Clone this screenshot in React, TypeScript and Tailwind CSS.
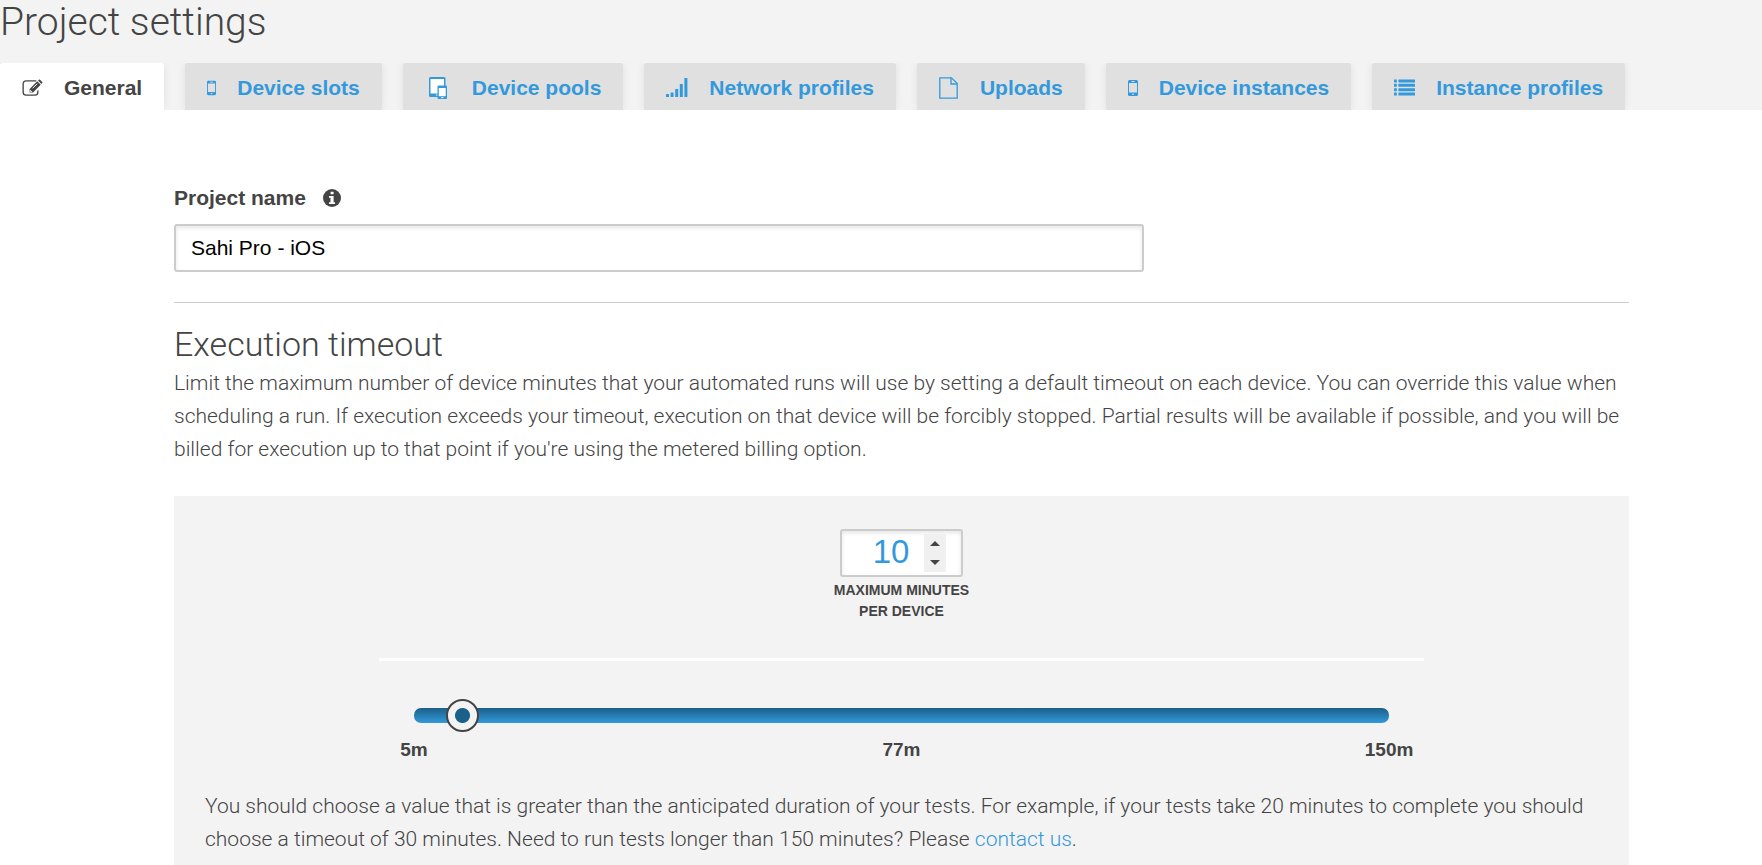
import React, { useState } from 'react';

type IconProps = { className?: string };

const EditIcon: React.FC<IconProps> = ({ className }) => (
  <svg className={className} width="22" height="18" viewBox="0 0 22 18" fill="none" stroke="currentColor">
    <path d="M15 1.6H4.5Q1.2 1.6 1.2 4.6V13.4Q1.2 16.4 4.5 16.4H13.5Q16.6 16.4 16.6 13.4V11.5" strokeWidth="1.4" />
    <path d="M8 13.8V10L16 2L19.6 5.6L11.6 13.8Z" fill="currentColor" stroke="none" />
    <path d="M16.8 1.2L18 0.2Q18.6 0 19.2 .5L21.2 2.6Q21.7 3.2 21.2 3.8L20.3 4.8Z" fill="currentColor" stroke="none" />
    <path d="M11.2 9.2L16 4.6M9 11.2V12.8H10.6" stroke="white" strokeWidth="1" />
  </svg>
);

const PhoneIcon: React.FC<IconProps> = ({ className }) => (
  <svg className={className} width="10" height="16" viewBox="0 0 10 16">
    <rect width="10" height="16" rx="1.5" fill="currentColor" />
    <rect x="1" y="3" width="8" height="9.5" fill="#e0e0e0" />
    <path d="M3.5 1.5H6.5M4 14.2H6" stroke="#e0e0e0" />
  </svg>
);

const PoolIcon: React.FC<IconProps> = ({ className }) => (
  <svg className={className} width="18" height="22" viewBox="0 0 18 22">
    <rect width="16.5" height="20" rx="1.5" fill="currentColor" />
    <rect x="1.5" y="2" width="13.5" height="14.5" fill="white" />
    <rect x="8.5" y="8.5" width="9.5" height="13.5" rx="1" fill="currentColor" />
    <rect x="9.8" y="11" width="6.9" height="8.2" fill="white" />
    <path d="M7 18H8.5M12.2 20.6H14.4" stroke="white" strokeWidth="1" />
  </svg>
);

const SignalIcon: React.FC<IconProps> = ({ className }) => (
  <svg className={className} width="22" height="19" viewBox="0 0 22 19" fill="currentColor">
    <rect x="0" y="16" width="3" height="3" rx=".5" />
    <rect x="4.6" y="14.5" width="3" height="4.5" rx=".5" />
    <rect x="9.2" y="11" width="3" height="8" rx=".5" />
    <rect x="13.8" y="6" width="3" height="13" rx=".5" />
    <rect x="18.4" y="0" width="3" height="19" rx=".5" />
  </svg>
);

const FileIcon: React.FC<IconProps> = ({ className }) => (
  <svg className={className} width="19" height="22" viewBox="0 0 19 22" fill="none" stroke="currentColor" strokeWidth="1.3">
    <path d="M.8.8H12.5L18.2 6.5V21.2H.8Z" />
    <path d="M12 .8V7H18" />
  </svg>
);

const ListIcon: React.FC<IconProps> = ({ className }) => (
  <svg className={className} width="22" height="17" viewBox="0 0 22 17" fill="currentColor">
    {[0, 4.6, 9.2, 13.8].map((y) => (
      <React.Fragment key={y}>
        <rect x="0" y={y} width="3" height="3.2" rx=".4" />
        <rect x="4.6" y={y} width="17.4" height="3.2" rx=".4" />
      </React.Fragment>
    ))}
  </svg>
);

const InfoIcon: React.FC<IconProps> = ({ className }) => (
  <svg className={className} width="18" height="18" viewBox="0 0 18 18">
    <circle cx="9" cy="9" r="9" fill="currentColor" />
    <path d="M7.6 2.8H10.6V5.3H7.6ZM6 7H10.6V13.2H12V15H6V13.2H7.5V8.8H6Z" fill="white" />
  </svg>
);

const TABS = [
  { label: 'General', icon: <EditIcon />, iconBox: 'w-[21px]' },
  { label: 'Device slots', icon: <PhoneIcon />, iconBox: 'w-[9px]' },
  { label: 'Device pools', icon: <PoolIcon />, iconBox: 'w-[26px] justify-center' },
  { label: 'Network profiles', icon: <SignalIcon />, iconBox: 'w-[22px]' },
  { label: 'Uploads', icon: <FileIcon />, iconBox: 'w-[20px]' },
  { label: 'Device instances', icon: <PhoneIcon />, iconBox: 'w-[10px]' },
  { label: 'Instance profiles', icon: <ListIcon />, iconBox: 'w-[21px]' },
];

const App: React.FC = () => {
  const [minutes, setMinutes] = useState(10);

  return (
    <div className="min-h-screen bg-white font-['Liberation_Sans',Arial,sans-serif] text-[#444]">
      <header className="bg-[#f3f3f3]">
        <h1 className="pb-[19px] font-[Roboto,sans-serif] text-[39px] font-light leading-[44px]">Project settings</h1>
        <nav className="flex gap-[21px] overflow-hidden">
          {TABS.map((tab, index) => (
            <a
              key={tab.label}
              href="#"
              className={`flex h-[47px] shrink-0 items-center gap-[21px] rounded-t-[3px] px-[22px] pt-[2px] text-[21px] font-bold shadow-[0_0_8px_rgba(0,0,0,0.08)] ${
                index === 0 ? 'bg-white text-[#444]' : 'bg-[#e0e0e0] text-[#3399db]'
              }`}
            >
              <span className={`flex ${tab.iconBox}`}>{tab.icon}</span>
              {tab.label}
            </a>
          ))}
        </nav>
      </header>

      <main className="mr-[133px] ml-[174px] pt-[73px]">
        {/* Project name */}
        <div className="border-b border-[#ccc] pb-[30px]">
          <div className="mb-[11px] flex items-center gap-[17px] text-[21px] leading-[30px] font-bold">
            <label htmlFor="project-name">Project name</label>
            <InfoIcon />
          </div>
          <input
            id="project-name"
            type="text"
            defaultValue="Sahi Pro - iOS"
            className="block h-[48px] w-2/3 rounded-[3px] border-2 border-[#ccc] bg-white px-[15px] text-[21px] text-black shadow-[inset_0_2px_4px_rgba(0,0,0,0.1)] outline-none"
          />
        </div>

        {/* Execution timeout */}
        <h2 className="mt-[20px] font-[Roboto,sans-serif] text-[34px] font-light leading-[42px]">Execution timeout</h2>
        <p className="mt-[2px] font-[Roboto,sans-serif] text-[21px] font-light leading-[33px]">
          Limit the maximum number of device minutes that your automated runs will use by setting a default timeout on
          each device. You can override this value when scheduling a run. If execution exceeds your timeout, execution
          on that device will be forcibly stopped. Partial results will be available if possible, and you will be
          billed for execution up to that point if you're using the metered billing option.
        </p>

        <section className="mt-[30px] bg-[#f3f3f3] px-[31px] pt-[33px] pb-[30px]">
          <div className="flex flex-col items-center">
            <div className="relative">
              <input
                id="max-minutes"
                type="number"
                min={5}
                max={150}
                value={minutes}
                onChange={(e) => setMinutes(Number(e.target.value))}
                className="block h-[48px] w-[123px] [appearance:textfield] rounded-[3px] border-2 border-[#ccc] bg-white pr-[36px] pb-[2px] pl-[15px] text-center text-[33px] text-[#3399db] shadow-[inset_0_2px_4px_rgba(0,0,0,0.1)] outline-none [&::-webkit-inner-spin-button]:appearance-none"
              />
              <div className="absolute top-[5px] right-[17px] flex h-[38px] w-[22px] flex-col bg-[#f0f0f0] text-[#444]">
                <button
                  type="button"
                  aria-label="Increase"
                  className="flex flex-1 items-center justify-center"
                  onClick={() => setMinutes(Math.min(150, minutes + 1))}
                >
                  <svg width="10" height="5" viewBox="0 0 10 5" fill="currentColor">
                    <path d="M0 5L5 0L10 5Z" />
                  </svg>
                </button>
                <button
                  type="button"
                  aria-label="Decrease"
                  className="flex flex-1 items-center justify-center"
                  onClick={() => setMinutes(Math.max(5, minutes - 1))}
                >
                  <svg width="10" height="5" viewBox="0 0 10 5" fill="currentColor">
                    <path d="M0 0L5 5L10 0Z" />
                  </svg>
                </button>
              </div>
            </div>
            <label htmlFor="max-minutes" className="mt-[3px] text-center text-[14px] leading-[21px] font-bold uppercase">
              Maximum minutes
              <br />
              per device
            </label>
          </div>

          <div className="mx-auto mt-[36px] w-3/4 border-t-3 border-white pt-[38px]">
            <div className="mx-auto w-14/15">
              <input
                type="range"
                aria-label="Maximum minutes per device"
                min={5}
                max={150}
                value={minutes}
                onChange={(e) => setMinutes(Number(e.target.value))}
                className="block h-[33px] w-full appearance-none bg-transparent [&::-webkit-slider-runnable-track]:h-[15px] [&::-webkit-slider-runnable-track]:rounded-[7px] [&::-webkit-slider-runnable-track]:bg-linear-to-b [&::-webkit-slider-runnable-track]:from-[#1b6089] [&::-webkit-slider-runnable-track]:to-[#3399db] [&::-webkit-slider-thumb]:-mt-[9px] [&::-webkit-slider-thumb]:size-[33px] [&::-webkit-slider-thumb]:appearance-none [&::-webkit-slider-thumb]:rounded-full [&::-webkit-slider-thumb]:border-2 [&::-webkit-slider-thumb]:border-[#444] [&::-webkit-slider-thumb]:bg-[radial-gradient(circle,#1b6089_0_7px,#f3f3f3_8px)]"
              />
              <div className="flex justify-between pt-[1px] text-[19px] leading-[33px] font-bold">
                <span className="flex w-0 justify-center">5m</span>
                <span className="flex w-0 justify-center">77m</span>
                <span className="flex w-0 justify-center">150m</span>
              </div>
            </div>
          </div>

          <p className="mt-[24px] font-[Roboto,sans-serif] text-[21px] font-light leading-[33px]">
            You should choose a value that is greater than the anticipated duration of your tests. For example, if your
            tests take 20 minutes to complete you should choose a timeout of 30 minutes. Need to run tests longer than
            150 minutes? Please{' '}
            <a href="#" className="text-[#3399db]">
              contact us
            </a>
            .
          </p>
        </section>
      </main>
    </div>
  );
};

export default App;
